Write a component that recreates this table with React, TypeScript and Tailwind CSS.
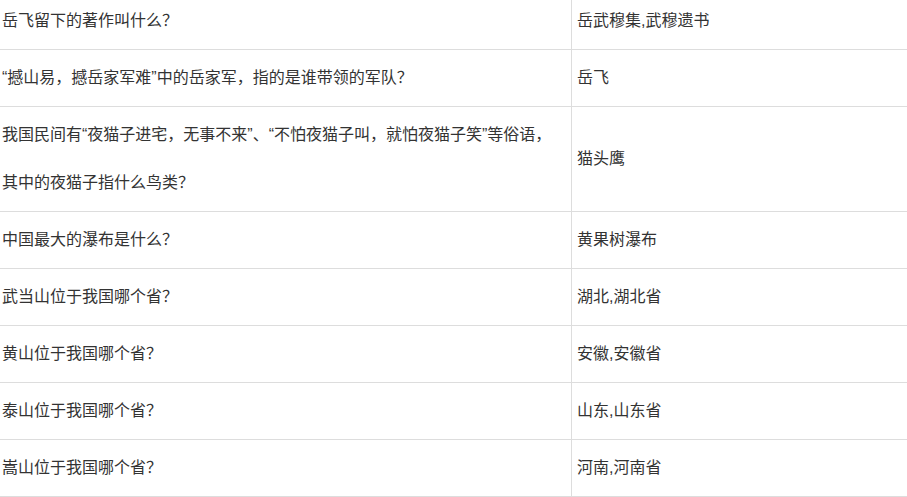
const rows: { q: React.ReactNode; a: string }[] = [
  { q: '岳飞留下的著作叫什么？', a: '岳武穆集,武穆遗书' },
  { q: '“撼山易，撼岳家军难”中的岳家军，指的是谁带领的军队？', a: '岳飞' },
  {
    q: (
      <>
        我国民间有“夜猫子进宅，无事不来”、“不怕夜猫子叫，就怕夜猫子笑”等俗语，
        <br />
        其中的夜猫子指什么鸟类？
      </>
    ),
    a: '猫头鹰',
  },
  { q: '中国最大的瀑布是什么？', a: '黄果树瀑布' },
  { q: '武当山位于我国哪个省？', a: '湖北,湖北省' },
  { q: '黄山位于我国哪个省？', a: '安徽,安徽省' },
  { q: '泰山位于我国哪个省？', a: '山东,山东省' },
  { q: '嵩山位于我国哪个省？', a: '河南,河南省' },
];

export default function App() {
  return (
    <div className="h-[497px] overflow-hidden bg-white">
      <div
        className="-mt-[7px] text-[16px] text-[#333]"
        style={{ fontFamily: '"Liberation Sans", "Noto Sans CJK SC", sans-serif' }}
      >
        {rows.map((row, i) => (
          <div key={i} className="flex border-b border-[#dddddd]">
            <div className="w-[572px] shrink-0 border-r border-[#dddddd] py-1 pl-[2px] leading-[48px]">
              {row.q}
            </div>
            <div className="flex flex-1 items-center py-1 pl-[5px] leading-[48px]">
              {row.a}
            </div>
          </div>
        ))}
      </div>
    </div>
  );
}
